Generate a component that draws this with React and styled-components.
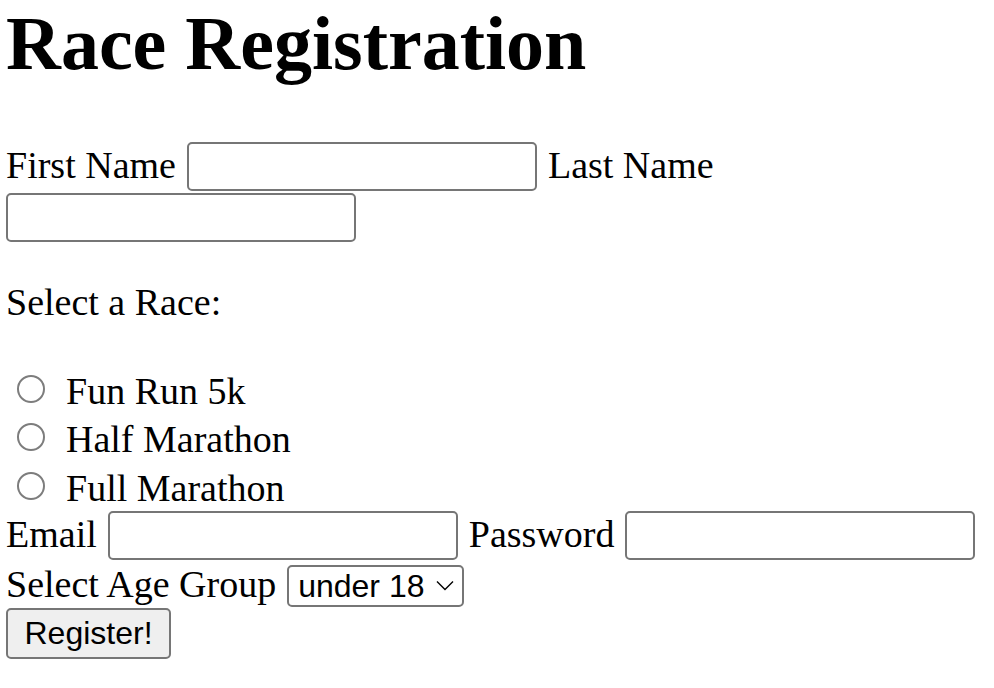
import React from 'react';
import styled, { createGlobalStyle } from 'styled-components';

const GlobalStyle = createGlobalStyle`
  body {
    margin: 0;
    background: #ffffff;
  }
`;

const ChevronIcon = () => (
  <Chevron width="18" height="11" viewBox="0 0 18 11" aria-hidden="true">
    <path d="M1 1.5 L9 9.5 L17 1.5" fill="none" stroke="#000" strokeWidth="1.4" />
  </Chevron>
);

const App = () => {
  const races = ['Fun Run 5k', 'Half Marathon', 'Full Marathon'];

  return (
    <>
      <GlobalStyle />
      <Page>
        <Title>Race Registration</Title>
        <Form onSubmit={(e) => e.preventDefault()}>
          <FieldRow>
            <Label $drop={4}>First Name</Label>
            <TextInput type="text" name="firstName" />
            <Label $drop={4}>Last Name</Label>
            <TextInput type="text" name="lastName" />
          </FieldRow>

          <Prompt>Select a Race:</Prompt>

          <RadioGroup>
            {races.map((race) => (
              <RadioRow key={race}>
                <Radio type="radio" name="race" value={race} />
                <Label $drop={0}>{race}</Label>
              </RadioRow>
            ))}
          </RadioGroup>

          <FieldRow $top={1}>
            <Label $drop={4}>Email</Label>
            <TextInput type="email" name="email" />
            <Label $drop={4}>Password</Label>
            <TextInput type="password" name="password" />
          </FieldRow>

          <FieldRow $top={2}>
            <Label $drop={1}>Select Age Group</Label>
            <SelectWrap>
              <Select name="age" defaultValue="under18">
                <option value="under18">under 18</option>
                <option value="18to39">18 - 39</option>
                <option value="40plus">40+</option>
              </Select>
              <ChevronIcon />
            </SelectWrap>
          </FieldRow>

          <SubmitButton type="submit">Register!</SubmitButton>
        </Form>
      </Page>
    </>
  );
};

const Page = styled.div`
  padding: 0 0 0 6px;
  font-family: 'Liberation Serif', 'Times New Roman', serif;
  font-size: 38px;
  color: #000000;
`;

const Title = styled.h1`
  margin: 0 0 55px;
  font-size: 76px;
  font-weight: bold;
  line-height: normal;
`;

const Form = styled.form`
  display: flex;
  flex-direction: column;
  align-items: flex-start;
`;

const FieldRow = styled.div`
  display: flex;
  flex-wrap: wrap;
  align-items: flex-end;
  column-gap: 11px;
  row-gap: 2px;
  margin-top: ${(p) => p.$top || 0}px;
`;

const Label = styled.span`
  line-height: normal;
  margin-bottom: ${(p) => p.$drop}px;
`;

const TextInput = styled.input`
  box-sizing: border-box;
  width: 350px;
  height: 49px;
  margin: 0;
  padding: 2px 8px;
  border: 2px solid #767676;
  border-radius: 5px;
  background: #ffffff;
  font-family: 'Liberation Sans', Arial, sans-serif;
  font-size: 32px;
`;

const Prompt = styled.p`
  margin: 38px 0;
  line-height: normal;
`;

const RadioGroup = styled.div`
  display: flex;
  flex-direction: column;
  padding-top: 2px;
`;

const RadioRow = styled.label`
  display: flex;
  align-items: flex-end;
  height: 48.5px;
`;

const Radio = styled.input`
  appearance: none;
  box-sizing: border-box;
  width: 28px;
  height: 28px;
  margin: 0 21px 10px 11px;
  border: 2px solid #7d7d7d;
  border-radius: 50%;
  background: #ffffff;
  flex-shrink: 0;
`;

const SelectWrap = styled.div`
  position: relative;
  display: flex;
`;

const Select = styled.select`
  appearance: none;
  box-sizing: border-box;
  width: 177px;
  height: 42px;
  margin: 0;
  padding: 0 34px 0 9px;
  border: 2px solid #767676;
  border-radius: 5px;
  background: #ffffff;
  color: #000000;
  font-family: 'Liberation Sans', Arial, sans-serif;
  font-size: 32px;
`;

const Chevron = styled.svg`
  position: absolute;
  right: 10px;
  top: 15px;
  pointer-events: none;
`;

const SubmitButton = styled.button`
  box-sizing: border-box;
  width: 165px;
  height: 51px;
  margin-top: 1px;
  padding: 0;
  border: 2px solid #767676;
  border-radius: 5px;
  background: #efefef;
  color: #000000;
  font-family: 'Liberation Sans', Arial, sans-serif;
  font-size: 32px;
`;

export default App;
